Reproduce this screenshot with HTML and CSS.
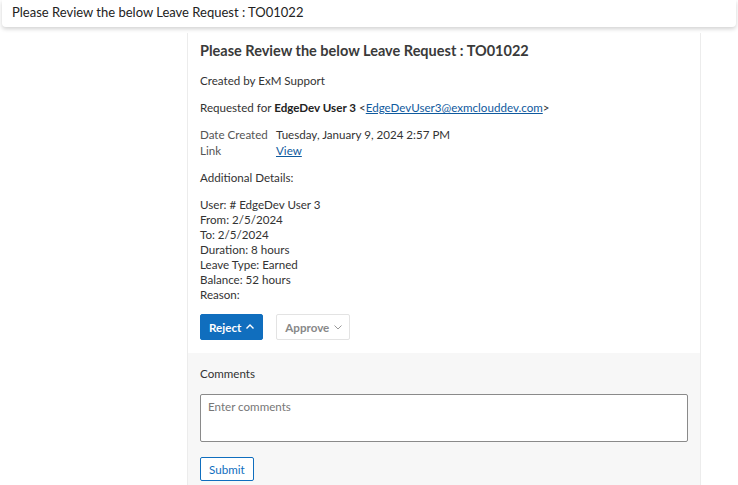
FILE: index.html
```html
<!DOCTYPE html>
<html lang="en">
<head>
  <meta charset="UTF-8">
  <title>Leave Request</title>
  <link rel="stylesheet" href="styles.css">
</head>
<body>

  <div class="header">Please Review the below Leave Request : TO01022</div>

  <div class="card">
    <div class="card-body">
      <h2 class="title">Please Review the below Leave Request : TO01022</h2>
      <p class="line">Created by ExM Support</p>
      <p class="line">Requested for <strong>EdgeDev User 3</strong> &lt;<a href="#">EdgeDevUser3@exmclouddev.com</a>&gt;</p>

      <div class="facts">
        <span class="fact-label">Date Created</span>
        <span>Tuesday, January 9, 2024 2:57 PM</span>
        <span class="fact-label">Link</span>
        <span><a href="#">View</a></span>
      </div>

      <p class="line">Additional Details:</p>
      <div class="details">
        User: # EdgeDev User 3<br>
        From: 2/5/2024<br>
        To: 2/5/2024<br>
        Duration: 8 hours<br>
        Leave Type: Earned<br>
        Balance: 52 hours<br>
        Reason:
      </div>

      <div class="actions">
        <button class="btn-primary">Reject
          <svg width="10" height="10" viewBox="0 0 10 10"><path d="M1.5 6.5 L5 3 L8.5 6.5" fill="none" stroke="#fff" stroke-width="1.4"/></svg>
        </button>
        <button class="btn-default">Approve
          <svg width="10" height="10" viewBox="0 0 10 10"><path d="M1.5 3.5 L5 7 L8.5 3.5" fill="none" stroke="#999" stroke-width="1"/></svg>
        </button>
      </div>
    </div>

    <div class="card-footer">
      <label class="comments-label" for="comments">Comments</label>
      <textarea id="comments" placeholder="Enter comments"></textarea>
      <button class="btn-outline">Submit</button>
    </div>
  </div>

</body>
</html>
```

FILE: styles.css
```css
body {
  margin: 0;
  font-family: Lato, "Noto Sans", Arial, sans-serif;
  font-size: 11.6px;
  color: #333;
  background-color: #fff;
}
.header {
  margin: 0 2px;
  height: 27px;
  line-height: 24px;
  padding: 0 10px;
  font-size: 13px;
  color: #222;
  background-color: #fff;
  border-radius: 0 0 4px 4px;
  box-shadow: 0 2px 4px rgba(0,0,0,0.18);
}
.card {
  margin: 6px 37px 0 187px;
  border-left: 1px solid #ececec;
  border-right: 1px solid #ececec;
}
.card-body {
  padding: 7px 12px 13px 12px;
}
.title {
  margin: 0 0 11px 0;
  line-height: 22px;
  font-size: 14.5px;
  font-weight: 700;
  color: #3a3a3a;
}
.line {
  margin: 0 0 11px 0;
  line-height: 16px;
}
.line strong {
  font-weight: 700;
  color: #222;
}
a {
  color: #0f5a9e;
}
.facts {
  display: grid;
  grid-template-columns: 76px auto;
  line-height: 16px;
  margin-bottom: 11px;
}
.fact-label {
  color: #555;
}
.details {
  line-height: 15px;
  margin-bottom: 12px;
}
.actions {
  display: flex;
  gap: 13px;
}
.actions button {
  height: 26px;
  display: flex;
  align-items: center;
  gap: 4px;
  font-family: inherit;
  font-size: 11.6px;
  font-weight: 700;
  border-radius: 2px;
  cursor: pointer;
}
.btn-primary {
  background-color: #106ebe;
  color: #fff;
  border: 1px solid #106ebe;
  padding: 0 7px 0 8px;
}
.btn-default {
  background-color: #fff;
  color: #888;
  border: 1px solid #e3e3e3;
  padding: 0 6px 0 8px;
}
.card-footer {
  background-color: #f7f7f7;
  padding: 13px 12px 6px 12px;
}
.comments-label {
  display: block;
  line-height: 16px;
  margin-bottom: 12px;
}
.card-footer textarea {
  display: block;
  box-sizing: border-box;
  width: 100%;
  height: 48px;
  padding: 5px 7px;
  border: 1px solid #8a8a8a;
  border-radius: 2px;
  font-family: inherit;
  font-size: 11.6px;
  resize: none;
  margin-bottom: 15px;
}
.card-footer textarea::placeholder {
  color: #777;
}
.btn-outline {
  height: 24px;
  padding: 0 8px;
  background-color: #fff;
  color: #106ebe;
  border: 1px solid #106ebe;
  border-radius: 2px;
  font-family: inherit;
  font-size: 11.6px;
  cursor: pointer;
}
```
